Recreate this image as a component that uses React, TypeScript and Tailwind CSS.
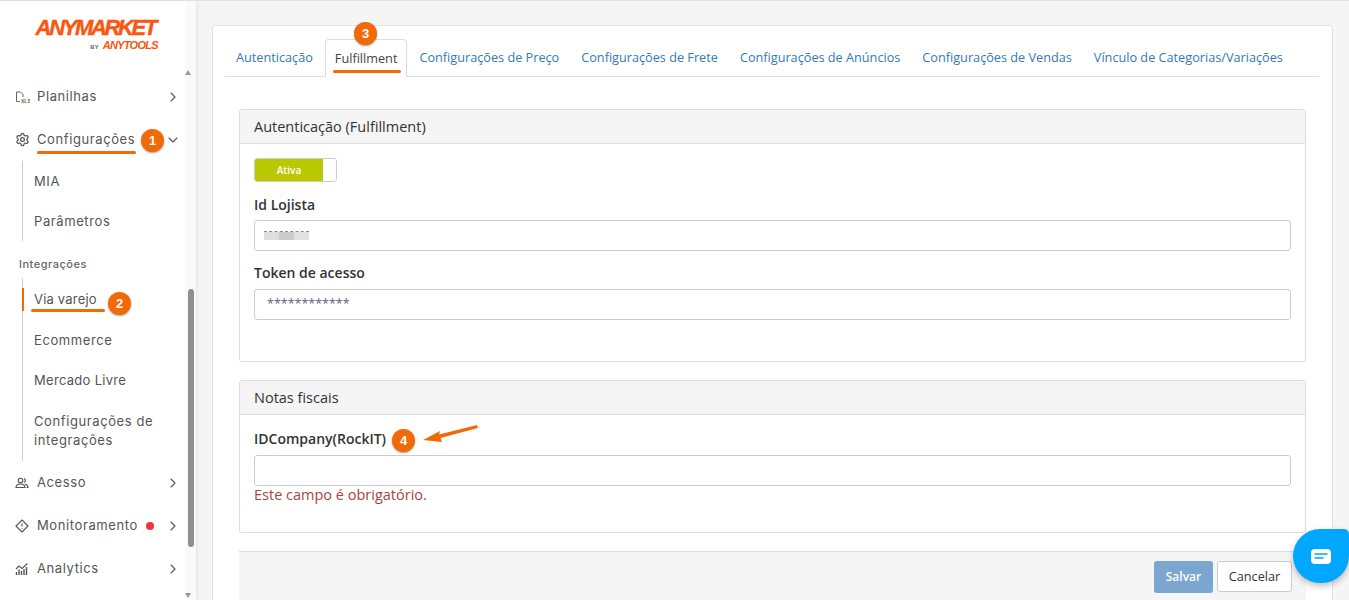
import { ChevronDown, ChevronRight, Settings } from 'lucide-react';
import React, { FC, ReactNode } from 'react';

const sideText = "font-['Inter',sans-serif] text-[13px] tracking-[0.6px] text-[#555]";

const Badge: FC<{ n: number; className: string }> = ({ n, className }) => (
  <span
    className={`absolute flex h-[23px] w-[23px] items-center justify-center rounded-full bg-[#f26a07] font-['Liberation_Sans',sans-serif] text-[13px] font-bold text-white shadow-[0_1px_2px_rgba(0,0,0,0.35)] ${className}`}
  >
    {n}
  </span>
);

const Mark: FC<{ className: string }> = ({ className }) => (
  <span className={`absolute h-[3px] rounded-full bg-[#f26a07] ${className}`} />
);

const SheetIcon = () => (
  <svg width="15" height="14" viewBox="0 0 15 14" fill="none" stroke="#666" strokeWidth="1">
    <path d="M1.500 11.500V2h4l2.500 2.500V7M1.500 11.500H5" />
    <text x="6" y="12.500" fontSize="5" fontWeight="700" fill="#666" stroke="none" fontFamily="Liberation Sans, sans-serif">
      XLS
    </text>
  </svg>
);

const PeopleIcon = () => (
  <svg width="14" height="14" viewBox="0 0 14 14" fill="none" stroke="#555" strokeWidth="1.100">
    <circle cx="5.500" cy="4.500" r="2.300" />
    <path d="M9 2.400a2.300 2.300 0 0 1 0 4.200M1 11.500c0-2.500 1.800-3.500 4.500-3.500S10 9 10 11.500zM10 8.200c1.800.3 3 1.300 3 3.300h-1.500" />
  </svg>
);

const DiamondIcon = () => (
  <svg width="14" height="14" viewBox="0 0 14 14" fill="none" stroke="#555" strokeWidth="1.100">
    <path d="M7 1l6 6-6 6-6-6z" strokeLinejoin="round" />
    <path d="M7 4.200v3.400M7 9v.8" />
  </svg>
);

const ChartIcon = () => (
  <svg width="14" height="14" viewBox="0 0 14 14" fill="none" stroke="#555" strokeWidth="1.100">
    <path d="M1 7l3-3 3 2.500L12.500 1.500" />
    <path d="M1.500 13v-3M4 13V7.500M6.500 13V9M9 13V7M11.500 13V5" strokeWidth="1.400" />
  </svg>
);

const MainItem: FC<{ icon: ReactNode; label: string; open?: boolean; dot?: boolean }> = ({ icon, label, open, dot }) => (
  <div className="flex h-[43px] items-center pl-[15px] pr-[15px]">
    <span className="flex w-[22px] shrink-0 items-center">{icon}</span>
    <span className={sideText}>{label}</span>
    {dot && <span className="ml-[8px] h-[8px] w-[8px] rounded-full bg-[#f5333f]" />}
    <span className="ml-auto">
      {open ? <ChevronDown size={16} strokeWidth={1.6} color="#555" /> : <ChevronRight size={16} strokeWidth={1.6} color="#555" />}
    </span>
  </div>
);

const SubItem: FC<{ children: ReactNode; className?: string }> = ({ children, className = 'min-h-[40px]' }) => (
  <div className={`flex items-center pl-[11px] pr-2 ${className}`}>
    <span className={`${sideText} leading-[19px]`}>{children}</span>
  </div>
);

const Sidebar = () => (
  <aside className="relative h-[600px] w-[196px] shrink-0 overflow-hidden bg-white shadow-[1px_0_3px_rgba(0,0,0,0.08)]">
    <div className="flex h-[75px] flex-col items-end pr-[38px] pt-[16px] font-['Liberation_Sans',sans-serif] italic text-[#f9560f]">
      <span className="mr-[3px] text-[22px] font-bold leading-[23px] tracking-[-2.350px] [-webkit-text-stroke:0.4px_#f9560f]">ANYMARKET</span>
      <span className="flex items-baseline gap-1 text-[11px] font-bold leading-[13px] tracking-[-0.700px]">
        <span className="text-[6px] not-italic tracking-normal text-[#666]">BY</span>
        ANYTOOLS
      </span>
    </div>
    <MainItem icon={<SheetIcon />} label="Planilhas" />
    <MainItem icon={<Settings size={15} color="#555" />} label="Configurações" open />
    <div className="ml-[22px] mr-2 border-l border-[#ccc]">
      <SubItem>MIA</SubItem>
      <SubItem>Parâmetros</SubItem>
    </div>
    <div className="flex h-[34px] items-end pb-[3px] pl-[19px] font-['Inter',sans-serif] text-[11px] font-medium tracking-[0.5px] text-[#666]">
      Integrações
    </div>
    <div className="mr-2 ml-[22px] mt-[3px] border-l border-[#ccc]">
      <div className="relative">
        <span className="absolute top-[10px] -left-px h-[23px] w-[2px] bg-[#f26a07]" />
        <SubItem className="h-[42px]">
          <span className="tracking-[0.2px]">Via varejo</span>
        </SubItem>
      </div>
      <SubItem>Ecommerce</SubItem>
      <SubItem>
        <span className="tracking-[0.3px]">Mercado Livre</span>
      </SubItem>
      <div className="pt-[11px] pb-[10px]">
        <SubItem>
          Configurações de
          <br />
          integrações
        </SubItem>
      </div>
    </div>
    <MainItem icon={<PeopleIcon />} label="Acesso" />
    <MainItem icon={<DiamondIcon />} label="Monitoramento" dot />
    <MainItem icon={<ChartIcon />} label="Analytics" />

    {/* scrollbar */}
    <div className="absolute top-0 right-0 bottom-0 w-[11px] bg-[#fafafa]" />
    <div className="absolute top-[70px] right-[5px] h-0 w-0 border-x-[3px] border-b-[5px] border-x-transparent border-b-[#999]" />
    <div className="absolute top-[289px] right-[2px] h-[258px] w-[6px] rounded-full bg-[#8f8f8f]" />
    <div className="absolute top-[593px] right-[5px] h-0 w-0 border-x-[3px] border-t-[5px] border-x-transparent border-t-[#999]" />

    <Mark className="top-[151px] left-[37px] w-[99px]" />
    <Badge n={1} className="top-[129px] left-[141px]" />
    <Mark className="top-[309px] left-[31px] w-[74px]" />
    <Badge n={2} className="top-[292px] left-[108px]" />
  </aside>
);

const tabs = [
  'Autenticação',
  'Fulfillment',
  'Configurações de Preço',
  'Configurações de Frete',
  'Configurações de Anúncios',
  'Configurações de Vendas',
  'Vínculo de Categorias/Variações',
];

const Tabs = () => (
  <div className="relative flex h-[38px] border-b border-[#ddd] text-[12.700px]">
    {tabs.map((t, i) =>
      i === 1 ? (
        <div
          key={t}
          className="relative -mb-px ml-[1px] mr-[1px] flex items-center rounded-t border border-b-0 border-[#ddd] bg-white px-[9px] text-[#444]"
        >
          {t}
          <Mark className="bottom-[4px] left-[7px] w-[68px]" />
        </div>
      ) : (
        <div key={t} className="flex items-center px-[11px] text-[#337ab7]">
          {t}
        </div>
      ),
    )}
  </div>
);

const Panel: FC<{ title: string; className: string; children: ReactNode }> = ({ title, className, children }) => (
  <section className={`overflow-hidden rounded-[3px] border border-[#ddd] ${className}`}>
    <div className="flex h-[34px] items-center border-b border-[#ddd] bg-[#f5f5f5] px-[14px] text-[14.500px] text-[#333]">
      {title}
    </div>
    <div className="px-[14px]">{children}</div>
  </section>
);

const fieldInput = 'h-[31px] w-full rounded-[3px] border border-[#ccc] bg-white flex items-center';
const fieldLabel = 'block text-[14px] leading-[20px] font-semibold text-[#333]';

const App = () => (
  <div className="relative flex h-[600px] w-[1349px] overflow-hidden bg-[#f5f5f5] font-['Open_Sans',sans-serif] text-[12px]">
    <Sidebar />
    <main className="min-w-0 flex-1 pl-4 pt-[25px] pr-[16px]">
      <div className="relative h-[600px] rounded-t-[3px] border border-[#e3e3e3] bg-white pl-[12px] pr-[13px] pt-[13px]">
        <Tabs />
        <div className="ml-[14px] mr-[13px] mt-[32px]">
          <Panel title="Autenticação (Fulfillment)" className="h-[253px]">
            <div className="mt-[14px] flex h-[24px] w-[83px] overflow-hidden rounded-[3px] border border-[#ccc] bg-white">
              <div className="flex w-[68px] items-center justify-center bg-[#b9c800] text-[10px] font-semibold text-white">
                Ativa
              </div>
            </div>
            <label className={`${fieldLabel} mt-[13px] mb-[5px]`}>Id Lojista</label>
            <div className={`${fieldInput} pl-[9px]`}>
              {/* masked value */}
              <div className="flex h-[9px] border-t border-dashed border-[#888]">
                <span className="w-[15px] bg-[#dedede]" />
                <span className="w-[15px] bg-[#cbcbcb]" />
                <span className="w-[15px] bg-[#e2e2e2]" />
              </div>
            </div>
            <label className={`${fieldLabel} mt-[12px] mb-[6px]`}>Token de acesso</label>
            <div className={`${fieldInput} pl-3 text-[12.500px] text-[#667]`}>************</div>
          </Panel>
          <Panel title="Notas fiscais" className="mt-[18px] h-[153px]">
            <label className={`${fieldLabel} mt-[14px] mb-[6px]`}>IDCompany(RockIT)</label>
            <div className={fieldInput} />
            <p className="text-[14.500px] leading-[18px] text-[#a94442]">Este campo é obrigatório.</p>
          </Panel>
          <div className="mt-[18px] flex h-[60px] justify-end gap-1 border-t border-[#ddd] bg-[#f5f5f5] pt-[9px] pr-[14px]">
            <button className="h-[32px] w-[59px] rounded-[3px] bg-[#7ba6d0] text-[12px] font-semibold text-white">Salvar</button>
            <button className="h-[31px] w-[75px] rounded-[3px] border border-[#ccc] bg-white text-[12.700px] text-[#333]">Cancelar</button>
          </div>
        </div>
      </div>
    </main>

    <Badge n={3} className="top-[22px] left-[354px]" />
    <Badge n={4} className="top-[429px] left-[392px]" />
    <svg className="absolute top-[424px] left-[422px]" width="58" height="20" viewBox="0 0 58 20" fill="#f26a07">
      <path d="M1 16L18 7l-1 3.500L55 1l1 3-37.500 10 1.500 4z" />
    </svg>

    <div className="absolute top-[529px] left-[1293px] flex h-[54px] w-[56px] items-center justify-center rounded-[27px] rounded-tr-[5px] bg-[#00a7ff] shadow-[0_3px_6px_rgba(0,0,0,0.25)]">
      <svg width="20" height="15" viewBox="0 0 20 15">
        <rect x="0" y="0" width="20" height="15" rx="4" fill="#fff" />
        <path d="M4 5h12M4 9h8" stroke="#00a7ff" strokeWidth="1.500" strokeLinecap="round" />
      </svg>
    </div>
    <div className="absolute top-0 left-0 h-px w-full bg-[#e0e0e0]" />
  </div>
);

export default App;
